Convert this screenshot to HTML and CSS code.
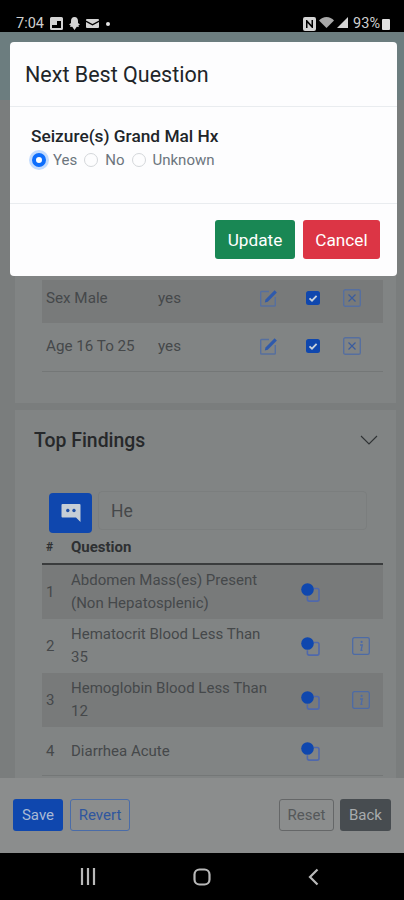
FILE: index.html
```html
<!DOCTYPE html>
<html lang="en">
<head>
    <meta charset="UTF-8">
    <meta name="viewport" content="width=device-width, initial-scale=1.0">
    <title>Next Best Question</title>
    <link rel="stylesheet" href="styles.css">
</head>
<body>
    <svg class="defs" width="0" height="0">
        <symbol id="ico-edit" viewBox="0 0 18 18">
            <path d="M9 2.500H1.500a.8.8 0 0 0-.8.8v12.900a.8.8 0 0 0 .8.8h13a.8.8 0 0 0 .8-.8V8" fill="none" stroke="#566f9f" stroke-width="1.400"/>
            <path d="M4.800 13.400l.7-3L14.600 1.200l2.300 2.300-9.100 9.200z" fill="currentColor"/>
        </symbol>
        <symbol id="ico-check" viewBox="0 0 14 14">
            <rect width="14" height="14" rx="2.500" fill="#0f47ae"/>
            <path d="M3.500 7.300l2.500 2.400 4.600-4.800" fill="none" stroke="#c9d3dc" stroke-width="1.800"/>
        </symbol>
        <symbol id="ico-x" viewBox="0 0 18 18">
            <rect x=".7" y=".7" width="16.600" height="16.600" rx="1.600" fill="none" stroke="#566f9f" stroke-width="1.400"/>
            <path d="M5.500 5.500l7 7m0-7l-7 7" fill="none" stroke="#3a5c9e" stroke-width="1.200"/>
        </symbol>
        <symbol id="ico-copy" viewBox="0 0 19 19">
            <path d="M12.500 5.500h3.700a1.800 1.800 0 0 1 1.800 1.800v9a1.800 1.800 0 0 1-1.800 1.800h-8a1.800 1.800 0 0 1-1.800-1.800v-3" fill="none" stroke="#4f68ac" stroke-width="1.600"/>
            <circle cx="6.500" cy="6.500" r="6.300" fill="#0f47ae"/>
        </symbol>
        <symbol id="ico-info" viewBox="0 0 18 18">
            <rect x=".7" y=".7" width="16.600" height="16.600" rx="1.600" fill="none" stroke="#4d6ba6" stroke-width="1.300"/>
            <circle cx="9.600" cy="4.900" r="1.100" fill="#4d6ba6"/>
            <path d="M8 8h2.300l-1.200 5.400h1.400" fill="none" stroke="#4d6ba6" stroke-width="1.300"/>
        </symbol>
    </svg>

    <div class="phone">
        <div class="status-bar">
            <span class="status-time">7:04</span>
            <svg class="status-ico" width="13" height="13" viewBox="0 0 13 13"><path fill-rule="evenodd" d="M1.500 0h10A1.500 1.500 0 0 1 13 1.500v10a1.500 1.500 0 0 1-1.500 1.500h-10A1.500 1.500 0 0 1 0 11.500v-10A1.500 1.500 0 0 1 1.500 0zM2 8v3h9V4H7v4z"/></svg>
            <svg class="status-ico" width="13" height="13" viewBox="0 0 13 13"><path d="M6.500 0C9 0 10 2 10 4v2l2 1.500-1.500.8.3 1.700-2-.2L6.500 13 4.200 9.800l-2 .2.300-1.700L1 7.500 3 6V4c0-2 1-4 3.500-4z"/></svg>
            <svg class="status-ico" width="13" height="13" viewBox="0 0 13 13"><path d="M1 2h11a1 1 0 0 1 1 1v.5L6.500 7 0 3.500V3a1 1 0 0 1 1-1zM0 5l6.500 3.500L13 5v5a1 1 0 0 1-1 1H1a1 1 0 0 1-1-1z"/></svg>
            <span class="status-dot"></span>
            <span class="status-gap"></span>
            <svg class="status-ico status-tight" width="13" height="14" viewBox="0 0 13 14"><path fill-rule="evenodd" d="M2 0h9a2 2 0 0 1 2 2v10a2 2 0 0 1-2 2H2a2 2 0 0 1-2-2V2a2 2 0 0 1 2-2zm1 3v8h1.500V6L9 11h1V3H8.500v5L4 3z"/></svg>
            <svg class="status-ico status-tight status-dim" width="15" height="11" viewBox="0 0 15 11"><path d="M0 3.500L7.500 11 15 3.500C13 1.500 10.500 0 7.500 0S2 1.500 0 3.500z"/></svg>
            <svg class="status-ico" width="11" height="11" viewBox="0 0 11 11"><path d="M11 0v11H0z"/></svg>
            <span class="status-pct">93%</span>
            <span class="status-batt"></span>
        </div>

        <div class="screen">
            <div class="app-bar"></div>
            <div class="content">
                <section class="card card-top">
                    <div class="answer-row answer-first row-shade">
                        <span class="answer-name">Sex Male</span>
                        <span class="answer-val">yes</span>
                        <svg class="i-edit"><use href="#ico-edit"/></svg>
                        <svg class="i-check"><use href="#ico-check"/></svg>
                        <svg class="i-x"><use href="#ico-x"/></svg>
                    </div>
                    <div class="answer-row row-line">
                        <span class="answer-name">Age 16 To 25</span>
                        <span class="answer-val">yes</span>
                        <svg class="i-edit"><use href="#ico-edit"/></svg>
                        <svg class="i-check"><use href="#ico-check"/></svg>
                        <svg class="i-x"><use href="#ico-x"/></svg>
                    </div>
                </section>

                <section class="card card-findings">
                    <div class="findings-head">
                        <h2>Top Findings</h2>
                        <svg class="chevron" width="18" height="10" viewBox="0 0 18 10"><path d="M1 1l8 8 8-8" fill="none" stroke="currentColor" stroke-width="1.100"/></svg>
                    </div>
                    <div class="search">
                        <button class="search-btn">
                            <svg width="20" height="21" viewBox="0 0 20 21"><path d="M1.500 1h17a1 1 0 0 1 1 1v17l-4.500-4.500H1.500a1 1 0 0 1-1-1V2a1 1 0 0 1 1-1z" fill="#c6ced6"/><circle cx="6.800" cy="7.500" r="1.700" fill="#1f4fa5"/><circle cx="13" cy="7.500" r="1.700" fill="#1f4fa5"/></svg>
                        </button>
                        <div class="search-input">He</div>
                    </div>
                    <div class="q-head">
                        <span class="q-num">#</span>
                        <span>Question</span>
                    </div>
                    <div class="q-row row-shade">
                        <span class="q-num">1</span>
                        <span class="q-text">Abdomen Mass(es) Present (Non Hepatosplenic)</span>
                        <svg class="i-copy"><use href="#ico-copy"/></svg>
                    </div>
                    <div class="q-row">
                        <span class="q-num">2</span>
                        <span class="q-text">Hematocrit Blood Less Than 35</span>
                        <svg class="i-copy"><use href="#ico-copy"/></svg>
                        <svg class="i-info"><use href="#ico-info"/></svg>
                    </div>
                    <div class="q-row row-shade">
                        <span class="q-num">3</span>
                        <span class="q-text">Hemoglobin Blood Less Than 12</span>
                        <svg class="i-copy"><use href="#ico-copy"/></svg>
                        <svg class="i-info"><use href="#ico-info"/></svg>
                    </div>
                    <div class="q-row q-last row-line">
                        <span class="q-num">4</span>
                        <span class="q-text">Diarrhea Acute</span>
                        <svg class="i-copy"><use href="#ico-copy"/></svg>
                    </div>
                </section>
            </div>

            <div class="footer">
                <button class="btn btn-save">Save</button>
                <button class="btn btn-revert">Revert</button>
                <span class="footer-gap"></span>
                <button class="btn btn-reset">Reset</button>
                <button class="btn btn-back">Back</button>
            </div>

            <div class="modal">
                <div class="modal-head">Next Best Question</div>
                <div class="modal-body">
                    <div class="modal-q">Seizure(s) Grand Mal Hx</div>
                    <div class="radios">
                        <span class="radio radio-on"></span><span class="radio-label">Yes</span>
                        <span class="radio"></span><span class="radio-label">No</span>
                        <span class="radio"></span><span class="radio-label">Unknown</span>
                    </div>
                </div>
                <div class="modal-foot">
                    <button class="btn-modal btn-update">Update</button>
                    <button class="btn-modal btn-cancel">Cancel</button>
                </div>
            </div>
        </div>

        <div class="nav-bar">
            <svg width="16" height="17" viewBox="0 0 16 17"><path d="M2 0v17M8 0v17M14 0v17" fill="none" stroke="currentColor" stroke-width="2.200"/></svg>
            <svg width="18" height="18" viewBox="0 0 18 18"><rect x="1.500" y="1.500" width="15" height="15" rx="5" fill="none" stroke="currentColor" stroke-width="2.200"/></svg>
            <svg width="11" height="18" viewBox="0 0 11 18"><path d="M9.500 1.500L2 9l7.500 7.500" fill="none" stroke="currentColor" stroke-width="2.200"/></svg>
        </div>
    </div>
</body>
</html>
```

FILE: styles.css
```css
html,body
{
    margin: 0;
    padding: 0;
}
*
{
    box-sizing: border-box;
}
body
{
    font-family: Roboto, "Liberation Sans", sans-serif;
    color: #45484a;
    background: #000;
}
.defs
{
    position: absolute;
}
button
{
    font-family: inherit;
}
.phone
{
    width: 404px;
    height: 900px;
    display: flex;
    flex-direction: column;
    overflow: hidden;
}

/* status bar */
.status-bar
{
    height: 32px;
    flex: none;
    padding: 17px 14px 0 16px;
    display: flex;
    align-items: flex-start;
    gap: 5px;
    background: #000;
    color: #cfcfcf;
    fill: #d4d4d4;
}
.status-time, .status-pct
{
    font-size: 14.500px;
    line-height: 14px;
    margin-right: 1px;
}
.status-pct
{
    margin-right: -3px;
}
.status-tight
{
    margin-right: -2px;
}
.status-dim
{
    fill: #a8a8a8;
}
.status-dot
{
    width: 4px;
    height: 4px;
    border-radius: 50%;
    background: #e4e4e4;
    margin: 5px 0 0 2px;
}
.status-gap
{
    flex: 1;
}
.status-batt
{
    width: 8px;
    height: 11px;
    margin-top: 2px;
    border-radius: 1px;
    background: #e0e0e0;
}

/* page behind the dialog */
.screen
{
    flex: 1;
    position: relative;
    display: flex;
    flex-direction: column;
    overflow: hidden;
    background: #7a7d7d;
}
.app-bar
{
    position: absolute;
    top: 0;
    left: 0;
    right: 0;
    height: 68px;
    background: #6c7d7f;
}
.content
{
    height: 746px;
    flex: none;
    padding: 0 8px 0 15px;
    overflow: hidden;
    display: flex;
    flex-direction: column;
    gap: 7px;
}
.card
{
    background: #818484;
    flex: none;
}
.card-top
{
    height: 371px;
    padding: 248px 13px 0 27px;
}
.card-findings
{
    flex: 1;
    padding: 0 13px 0 27px;
}
.row-shade
{
    background: #787a7a;
}
.row-line
{
    border-bottom: 1px solid #747777;
}
.answer-row
{
    display: flex;
    align-items: center;
    height: 49px;
    padding: 0 0 3px 4px;
    font-size: 15.200px;
}
.answer-first
{
    height: 43px;
    padding-bottom: 8px;
}
.answer-name
{
    width: 112px;
}
.answer-val
{
    width: 102px;
}
.answer-row svg
{
    color: #2f5aac;
}
.i-edit
{
    width: 18px;
    height: 18px;
}
.i-check
{
    width: 14px;
    height: 14px;
    margin-left: 28px;
}
.i-x
{
    width: 18px;
    height: 18px;
    margin-left: 23px;
}

/* top findings */
.findings-head
{
    display: flex;
    align-items: center;
    justify-content: space-between;
    height: 60px;
    margin: 0 5px 0 -8px;
}
.findings-head h2
{
    margin: 0;
    font-size: 19.400px;
    font-weight: 500;
    color: #26282a;
}
.chevron
{
    color: #2f3234;
}
.search
{
    display: flex;
    align-items: flex-start;
    gap: 6px;
    margin: 21px 16px 0 7px;
}
.search-btn
{
    width: 43px;
    height: 40px;
    margin-top: 2px;
    border: none;
    border-radius: 4px;
    background: #0f47ae;
    display: flex;
    align-items: center;
    justify-content: center;
    padding: 0;
}
.search-input
{
    flex: 1;
    height: 39px;
    border: 1px solid #7b7e7e;
    border-radius: 4px;
    padding: 0 12px;
    font-size: 17.500px;
    line-height: 39px;
}
.q-head
{
    display: flex;
    align-items: center;
    height: 32px;
    padding: 0 0 2px 4px;
    border-bottom: 2px solid #3a3c3d;
    font-size: 15px;
    font-weight: 700;
    color: #2e3032;
}
.q-num
{
    width: 25px;
    flex: none;
    font-size: 15px;
}
.q-head .q-num
{
    font-size: 12px;
}
.q-row
{
    display: flex;
    align-items: center;
    height: 54px;
    padding-left: 4px;
    font-size: 15px;
    line-height: 23px;
}
.q-last
{
    height: 49px;
}
.q-text
{
    width: 202px;
    flex: none;
    margin-right: 28px;
}
.i-copy
{
    width: 19px;
    height: 19px;
    flex: none;
}
.i-info
{
    width: 18px;
    height: 18px;
    flex: none;
    margin-left: 32px;
}

/* bottom buttons */
.footer
{
    flex: 1;
    display: flex;
    align-items: flex-start;
    gap: 7px;
    padding: 21px 13px 0;
    background: #8b8d8d;
}
.footer-gap
{
    flex: 1;
}
.btn
{
    height: 32px;
    padding: 0;
    font-size: 15px;
    border-radius: 3px;
    border: 1px solid transparent;
}
.btn-save
{
    width: 50px;
    background: #0f47ae;
    color: #a9b9d4;
}
.btn-revert
{
    width: 60px;
    background: none;
    border-color: #4a6ca8;
    color: #2f569e;
}
.btn-reset
{
    width: 55px;
    background: none;
    border-color: #656768;
    color: #55585a;
}
.btn-back
{
    width: 51px;
    background: #474c50;
    color: #a7abad;
    margin-left: -1px;
}

/* dialog */
.modal
{
    position: absolute;
    top: 10px;
    left: 10px;
    width: 387px;
    height: 234px;
    border-radius: 4px;
    background: #fdfdfe;
    display: flex;
    flex-direction: column;
}
.modal-head
{
    height: 65px;
    flex: none;
    padding: 0 15px;
    display: flex;
    align-items: center;
    font-size: 21.500px;
    color: #212529;
    border-bottom: 1px solid #e9ecef;
}
.modal-body
{
    height: 96px;
    flex: none;
    padding: 19px 21px 0;
}
.modal-q
{
    font-size: 17.300px;
    font-weight: 500;
    line-height: 20px;
    color: #212529;
}
.radios
{
    display: flex;
    align-items: center;
    margin-top: 4px;
    height: 20px;
    font-size: 15px;
    color: #6c757d;
}
.radio
{
    width: 14px;
    height: 14px;
    flex: none;
    border: 1px solid #d4d7da;
    border-radius: 50%;
    margin-left: 1px;
}
.radio-on
{
    border: 4px solid #0d6efd;
    background: #fff;
    box-shadow: 0 0 0 3px #c2dbfe;
}
.radio-label
{
    margin: 0 6px 0 7px;
}
.modal-foot
{
    flex: 1;
    display: flex;
    justify-content: flex-end;
    gap: 8px;
    padding: 16px 17px 0 0;
    border-top: 1px solid #e9ecef;
}
.btn-modal
{
    height: 39px;
    padding: 0;
    border: none;
    border-radius: 3px;
    font-size: 17.200px;
    color: #fff;
}
.btn-update
{
    width: 80px;
    background: #198754;
}
.btn-cancel
{
    width: 77px;
    background: #dc3545;
}

/* android nav */
.nav-bar
{
    height: 47px;
    flex: none;
    background: #000;
    color: #b9b9b9;
    display: flex;
    align-items: center;
    padding: 0 85px 0 80px;
    justify-content: space-between;
}
```
